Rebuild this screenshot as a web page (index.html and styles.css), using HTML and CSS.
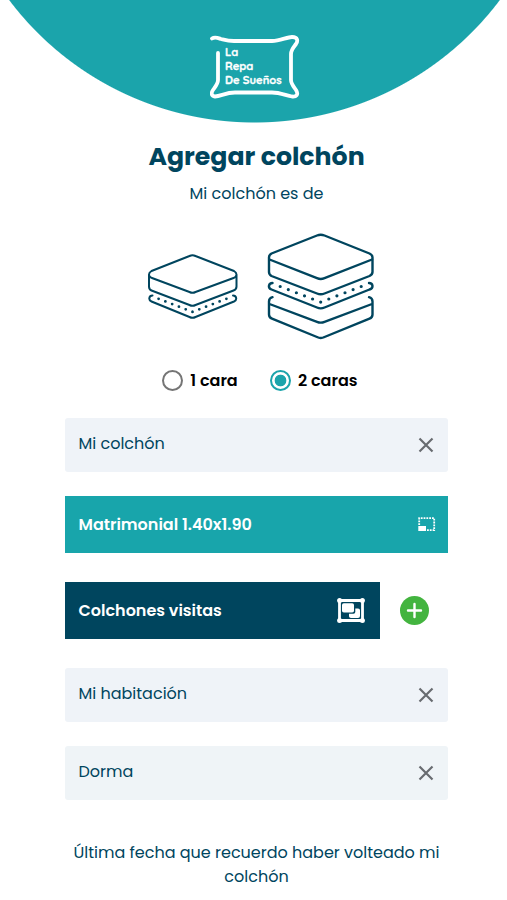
FILE: index.html
```html
<!DOCTYPE html>
<html lang="es">

<head>
    <meta charset="UTF-8">
    <meta name="viewport" content="width=device-width, initial-scale=1.0">
    <title>Agregar colchón</title>
    <link rel="stylesheet" href="styles.css">
</head>

<body>
    <header class="header">
        <div class="logo">
            <svg class="logo-frame" viewBox="0 0 90 64">
                <path d="M2 3.500C5 1.500 8 3 11 4C15 5 18 6 24 6H62C70 6 77 2 82 2C88 2 88 6 86 9C83 13 81 15 81 19V45C81 49 84 52 86 55C89 60 86 62 82 61.500C76 60.500 70 57.500 62 57.500H25C16 57.500 11 61 5 61.500C1 61 1 58 3 55C5 52 8 49 8 45V18" />
            </svg>
            <p class="logo-text">
                <span>La</span>
                <span>Repa</span>
                <span>De Sueños</span>
            </p>
        </div>
    </header>

    <main class="main">
        <h1 class="title">Agregar colchón</h1>
        <p class="subtitle">Mi colchón es de</p>

        <div class="mattresses">
            <svg class="mattress-one" viewBox="8 28.500 90 66">
                <path d="M49.500 30.500Q52.500 29 55.500 30.500L94 45.500Q96.500 47 96.500 49V61Q96.500 64 93.500 65L55.500 79.500Q52.500 81 49.500 79.500L11.500 65Q9 64 9 61V49Q9 47 11.500 45.500Z" />
                <path d="M9.500 50.500Q10 52 12 52.500L49.500 66.500Q52.500 68 55.500 66.500L93.500 52.500Q95.500 52 96 50.500" />
                <path d="M12.500 70C9 70 8 74.500 11.500 76L49.500 91.500Q52.500 93 55.500 91.500L94 76C97.500 74.500 96.500 70 93 70" />
                <path class="dots" d="M18.600 73.300L52.500 86.400M86.400 73.300L52.500 86.400" />
            </svg>
            <svg class="mattress-two" viewBox="12 7.500 107 107">
                <path d="M62 10Q65.700 8.500 69.500 10L114.500 28Q117.500 29.500 117.500 32V46.500Q117.500 49 114.500 50.500L69.500 68Q65.700 69.500 62 68L16.500 50.500Q14 49 14 46.500V32Q14 29.500 16.500 28Z" />
                <path d="M14.500 34L62 52.700Q65.700 54.300 69.500 52.700L117 34" />
                <path d="M17.500 57.500C13.500 57.500 12.500 62.500 16.500 64L62 82Q65.700 83.700 69.500 82L114.500 64C119 62.500 118 57.500 114 57.500" />
                <path class="dots big" d="M25.200 61L65.700 76.600M106.200 61L65.700 76.600" />
                <path d="M17.500 71.700Q14 72.500 14 76V89Q14 92 17 93.200L62 111.500Q65.700 113.500 69.500 111.500L114.500 93.200Q117.500 92 117.500 89V76Q117.500 72.500 114 71.700M14.500 78.500L62 96.300Q65.700 98 69.500 96.300L117 78.500" />
            </svg>
        </div>

        <div class="sides">
            <label class="side"><input type="radio" name="side" class="radio">1 cara</label>
            <label class="side"><input type="radio" name="side" class="radio" checked>2 caras</label>
        </div>

        <div class="field">
            <span>Mi colchón</span>
            <svg class="close" viewBox="0 0 16 16"><path d="M1.500 1.500L14.500 14.500M14.500 1.500L1.500 14.500" /></svg>
        </div>

        <div class="field field-teal">
            <span>Matrimonial 1.40x1.90</span>
            <svg class="size-icon" viewBox="0 0 18 15">
                <path class="dashed" d="M1.200 8V1.200H16.200V13.200H8" />
                <rect x="0.300" y="9" width="7.700" height="5" />
            </svg>
        </div>

        <div class="row">
            <div class="field field-navy">
                <span>Colchones visitas</span>
                <svg class="group-icon" viewBox="0 0 28 25">
                    <path class="frame" d="M2.500 2.500H25.500V22.500H2.500Z" />
                    <circle cx="2.600" cy="2.600" r="2.500" />
                    <circle cx="25.400" cy="2.600" r="2.500" />
                    <circle cx="2.600" cy="22.400" r="2.500" />
                    <circle cx="25.400" cy="22.400" r="2.500" />
                    <rect x="5" y="5.300" width="12" height="9.200" rx="1.800" />
                    <path d="M18.300 10.500H21Q23 10.500 23 12.300V18Q23 20 21 20H14Q12 20 12 18.200V15.800H16.500Q18.300 15.800 18.300 14Z" />
                </svg>
            </div>
            <button type="button" class="add">
                <svg viewBox="0 0 29 29"><path d="M14.500 8V21M8 14.500H21" /></svg>
            </button>
        </div>

        <div class="field">
            <span>Mi habitación</span>
            <svg class="close" viewBox="0 0 16 16"><path d="M1.500 1.500L14.500 14.500M14.500 1.500L1.500 14.500" /></svg>
        </div>

        <div class="field field-last">
            <span>Dorma</span>
            <svg class="close" viewBox="0 0 16 16"><path d="M1.500 1.500L14.500 14.500M14.500 1.500L1.500 14.500" /></svg>
        </div>

        <p class="last-date">Última fecha que recuerdo haber volteado mi colchón</p>
    </main>
</body>

</html>
```
FILE: styles.css
```css
* {
    box-sizing: border-box;
}

body {
    margin: 0;
    background: #fff;
    color: #00455e;
    font-family: Poppins, Inter, "Liberation Sans", sans-serif;
    font-size: 16px;
    overflow: hidden;
}

h1,
p {
    margin: 0;
}

.header {
    display: flex;
    justify-content: center;
    height: 123px;
    padding: 35px 0 0 2px;
    background: radial-gradient(circle 307px at 254.5px -184.5px, #1ba4ab 306.5px, #fff 307.5px);
}

.logo {
    position: relative;
    width: 90px;
    height: 64px;
}

.logo-frame {
    display: block;
    width: 90px;
    height: 64px;
    fill: none;
    stroke: #fff;
    stroke-width: 3.8;
    stroke-linecap: round;
    stroke-linejoin: round;
}

.logo-text {
    position: absolute;
    top: 10px;
    left: 15.5px;
    color: #fff;
    font-family: Quicksand, Comfortaa, Poppins, sans-serif;
    font-size: 11.2px;
    font-weight: 700;
    line-height: 14px;
    white-space: nowrap;
    -webkit-text-stroke: 0.3px #fff;
}

.logo-text span {
    display: block;
}

.main {
    display: flex;
    flex-direction: column;
    width: 383px;
    margin-left: 65px;
}

.title {
    margin-top: 16px;
    font-size: 25.2px;
    font-weight: 700;
    line-height: 36px;
    text-align: center;
}

.subtitle {
    margin-top: 7px;
    line-height: 24px;
    text-align: center;
}

.mattresses {
    display: flex;
    align-items: center;
    gap: 29px;
    height: 107px;
    margin: 27px 0 0 83px;
}

.mattresses svg {
    fill: none;
    stroke: #00455e;
    stroke-width: 2;
    stroke-linecap: round;
    stroke-linejoin: round;
}

.mattress-one {
    width: 90px;
    height: 66px;
}

.mattresses .mattress-two {
    width: 107px;
    height: 107px;
    stroke-width: 2.4;
}

.mattresses .dots {
    stroke-width: 2.8;
    stroke-dasharray: 0 7.268;
}

.mattresses .dots.big {
    stroke-width: 3.2;
    stroke-dasharray: 0 8.68;
}

.sides {
    display: flex;
    gap: 32px;
    height: 22px;
    margin: 29px 0 0 97px;
    color: #000;
    font-weight: 600;
}

.side {
    display: flex;
    align-items: center;
    gap: 7.3px;
}

.radio {
    width: 21px;
    height: 21px;
    margin: 0;
    border: 2px solid #757575;
    border-radius: 50%;
    appearance: none;
}

.radio:checked {
    border-color: #1ba4ab;
    background: radial-gradient(circle, #1ba4ab 5.5px, #fff 6.2px);
}

.field {
    display: flex;
    justify-content: space-between;
    height: 54px;
    padding: 0 14.5px 0 13.5px;
    border-radius: 3px;
    background: #eff3f8;
    line-height: 52px;
    white-space: nowrap;
}

.sides + .field {
    margin-top: 27px;
}

.close {
    width: 16px;
    height: 16px;
    margin-top: 19px;
    stroke: #686c70;
    stroke-width: 2.2;
}

.field-teal,
.field-navy {
    align-items: center;
    height: 57px;
    border-radius: 0;
    color: #fff;
    font-weight: 600;
    line-height: 57px;
}

.field-teal {
    margin-top: 24px;
    padding-right: 12.5px;
    background: #18a5ab;
}

.size-icon {
    width: 18px;
    height: 15px;
    fill: #fff;
}

.dashed {
    fill: none;
    stroke: #fff;
    stroke-width: 1.8;
    stroke-dasharray: 1.8 1;
}

.row {
    display: flex;
    align-items: center;
    gap: 20px;
    margin: 29px 0;
}

.field-navy {
    width: 315px;
    padding-right: 15px;
    background: #00455e;
}

.group-icon {
    width: 28px;
    height: 25px;
    fill: #fff;
}

.frame {
    fill: none;
    stroke: #fff;
    stroke-width: 2.8;
}

.add {
    width: 29px;
    height: 29px;
    padding: 0;
    border: 0;
    border-radius: 50%;
    background: #43b43f;
}

.add svg {
    display: block;
    stroke: #fff;
    stroke-width: 2.4;
    stroke-linecap: round;
}

.field-last {
    margin-top: 24px;
    background: #eff4f7;
}

.last-date {
    margin: 41px -5px 0;
    line-height: 24px;
    text-align: center;
}
```
